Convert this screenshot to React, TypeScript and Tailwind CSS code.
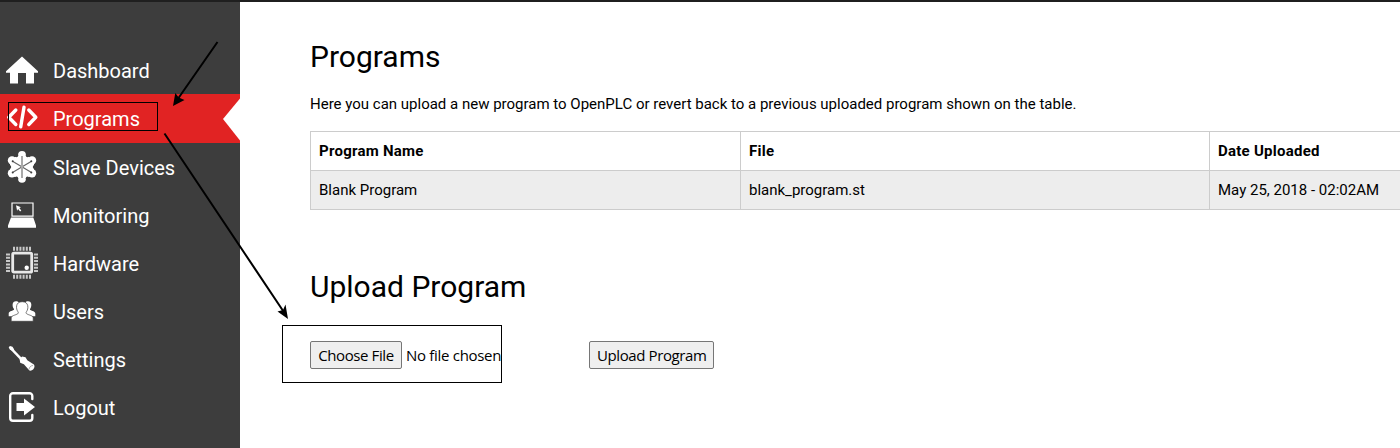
import React from "react";

const icons: Record<string, React.ReactNode> = {
  Dashboard: (
    <path fill="#fff" d="M18 6.500 34 21.300v1.400h-4v10.900h-8V23h-8v10.600H6V22.700H2v-1.400z" />
  ),
  Programs: (
    <g fill="none" stroke="#fff" strokeWidth="3.400" strokeLinecap="round" strokeLinejoin="round">
      <path d="M11.800 12 4.800 19.300l7 7.200M20 9.300l-3.300 19.600M24.800 12l7 7.300-7 7.200" />
    </g>
  ),
  "Slave Devices": (
    <>
      <g fill="#fff">
        <path d="M18 6 30 13v14l-12 7-12-7V13z" />
        <circle cx="18" cy="7.900" r="3.900" /><circle cx="18" cy="31.800" r="3.900" />
        <circle cx="8" cy="13.400" r="4.200" /><circle cx="28" cy="13.400" r="4.200" />
        <circle cx="8" cy="26.300" r="4.200" /><circle cx="28" cy="26.300" r="4.200" />
      </g>
      <g fill="#3d3d3d">
        <circle cx="12.500" cy="8.600" r="1.700" /><circle cx="23.500" cy="8.600" r="1.700" />
        <circle cx="12.500" cy="31.200" r="1.700" /><circle cx="23.500" cy="31.200" r="1.700" />
        <circle cx="5.200" cy="19.900" r="2" /><circle cx="30.800" cy="19.900" r="2" />
      </g>
      <path stroke="#666" strokeWidth="1.200" d="m8.500 14.300 19 11.200M27.500 14.300l-19 11.200" />
      <path stroke="#aaa" strokeWidth="2" d="M18 9v22" />
      <g fill="#3d3d3d">
        <circle cx="8.700" cy="14.300" r="1" /><circle cx="27.300" cy="14.300" r="1" />
        <circle cx="8.700" cy="25.500" r="1" /><circle cx="27.300" cy="25.500" r="1" />
      </g>
    </>
  ),
  Monitoring: (
    <>
      <path fill="none" stroke="#fff" strokeWidth="1.200" d="M8 8h21v13.200H8z" />
      <path fill="#fff" d="M7 22.400h22.300L32 30.500v2.300H4v-2.300zM12 10.300l5 2-1.700.8 2 2.300-1.200 1-2-2.300-1 1.600z" />
    </>
  ),
  Hardware: (
    <>
      <rect x="8.700" y="10.200" width="19" height="19" rx="1.200" fill="none" stroke="#e8e8e8" strokeWidth="2.800" />
      <g stroke="#c8c8c8" strokeWidth="2">
        <path d="M10 3.700v4M13.200 3.700v4M16.400 3.700v4M19.600 3.700v4M22.800 3.700v4M26 3.700v4M10 31.700v4M13.200 31.700v4M16.400 31.700v4M19.600 31.700v4M22.800 31.700v4M26 31.700v4" />
        <path d="M2 11.500h4M2 14.800h4M2 18.100h4M2 21.400h4M2 24.700h4M2 28h4M30 11.500h4M30 14.800h4M30 18.100h4M30 21.400h4M30 24.700h4M30 28h4" />
      </g>
      <circle cx="22.700" cy="24.700" r="2.200" fill="#fff" />
    </>
  ),
  Users: (
    <>
      <path fill="#fff" d="M4.700 25.200v-2.800c0-2 3.200-2.400 5-3.400.5-.4.4-1-.2-1.800-1.200-1.800-1.800-7 2.500-7 1.500 0 2.700.6 3.200 1.500h5.600c.5-.9 1.700-1.500 3.200-1.500 4.300 0 3.700 5.200 2.500 7-.6.8-.7 1.400-.2 1.800 1.800 1 5 1.400 5 3.400v2.800z" />
      <path fill="#fff" stroke="#3d3d3d" strokeWidth=".7" d="M7.200 30.300v-3.300c0-2.600 4.300-2.700 6.600-4.300.8-.6.6-1.300 0-2.200-1.800-2.400-2.700-9.800 4.400-9.800s6.200 7.400 4.400 9.800c-.6.900-.8 1.600 0 2.200 2.300 1.600 6.600 1.700 6.600 4.300v3.300z" />
    </>
  ),
  Settings: (
    <>
      <path stroke="#fff" strokeWidth="2.400" d="m6.500 8.800 11 11.500" />
      <path fill="#fff" d="m4.700 8.300 1.300-1.300 2.500.8 1.700 2.800-1.600 1.400-2.800-1.500zM15.600 20l2.500-2.400 3.400.7 1.800 2.900 6.600 4.300c2 2.800-1.400 7-4.500 6.100l-5.500-6.300-3.700-1.600z" />
      <path stroke="#999" fill="none" strokeWidth=".8" d="M25 30.500c.3-2.300 1.600-3.800 4-4" />
    </>
  ),
  Logout: (
    <>
      <path fill="none" stroke="#fff" strokeWidth="2.400" strokeLinecap="round" d="M28.300 12V9c0-1.600-1.200-2.800-2.800-2.800H9C7.400 6.200 6.200 7.400 6.200 9v22c0 1.600 1.200 2.800 2.800 2.800h16.500c1.600 0 2.800-1.200 2.800-2.800v-3" />
      <path fill="#fff" d="M12.500 16h7.500v-4.500l11 8.500-11 8.500v-4.500h-7.500z" />
    </>
  ),
};

const items = ["Dashboard", "Programs", "Slave Devices", "Monitoring", "Hardware", "Users", "Settings", "Logout"];

function NavItem({ label }: { label: string }) {
  const active = label === "Programs";
  return (
    <a className={`relative flex shrink-0 items-start pl-1 pt-1 text-white ${active ? "h-[49px] bg-[#e12323]" : "h-12"}`}>
      <svg className="h-10 w-9 shrink-0" viewBox="0 0 36 40">{icons[label]}</svg>
      <span className="ml-[13px] mt-[6px] whitespace-nowrap text-[20px] leading-[30px]">{label}</span>
      {active && (
        <svg className="absolute right-0 top-0 h-[49px] w-[17px]" viewBox="0 0 17 49">
          <path fill="#fff" d="M17 4.500v42L0 25z" />
        </svg>
      )}
    </a>
  );
}

const cell = "border border-[#ccc] px-2 h-[39px] text-left";
const head = `${cell} tracking-[0.25px]`;
const button = "h-7 rounded-[2px] border border-[#767676] bg-[#efefef] px-[7px] leading-[26px] whitespace-nowrap";

export default function App() {
  return (
    <div className="relative flex h-[448px] w-[1400px] overflow-hidden border-t-2 border-[#1f1f1f] bg-white font-['Roboto',sans-serif] text-black">
      <nav className="flex w-60 shrink-0 flex-col bg-[#3d3d3d] pt-11">
        {items.map((label) => <NavItem key={label} label={label} />)}
      </nav>
      <main className="ml-[70px] w-[1280px] shrink-0 pt-[35px]">
        <h1 className="text-[30px] leading-10">Programs</h1>
        <p className="mt-[15px] text-[15px] leading-[25px]">Here you can upload a new program to OpenPLC or revert back to a previous uploaded program shown on the table.</p>
        <table className="mt-[14px] w-[1280px] table-fixed border-collapse text-[15px]">
          <colgroup><col className="w-[430px]" /><col className="w-[469px]" /><col /></colgroup>
          <tbody>
            <tr><th className={head}>Program Name</th><th className={head}>File</th><th className={head}>Date Uploaded</th></tr>
            <tr className="bg-[#ededed]"><td className={cell}>Blank Program</td><td className={cell}>blank_program.st</td><td className={cell}>May 25, 2018 - 02:02AM</td></tr>
          </tbody>
        </table>
        <h1 className="mt-[57px] text-[30px] leading-10">Upload Program</h1>
        <form className="mt-[34px] flex items-center font-['Open_Sans','Noto_Sans',sans-serif] text-[15px] tracking-[-0.4px]">
          <div className="flex w-[279px] items-center">
            <button type="button" className={`${button} w-[92px]`}>Choose File</button>
            <span className="ml-1 whitespace-nowrap tracking-[-0.3px]">No file chosen</span>
          </div>
          <button type="button" className={`${button} w-[125px]`}>Upload Program</button>
        </form>
      </main>
      <svg className="pointer-events-none absolute left-0 -top-0.5 h-[448px] w-[520px]" viewBox="0 0 520 448">
        <g fill="none" stroke="#000" shapeRendering="crispEdges">
          <path d="M8.500 102.500h149v28h-149zM282.500 325.500h219v57h-219z" />
        </g>
        <g fill="none" stroke="#000" strokeWidth="2">
          <path d="m217.500 42-39 56M164.500 133.500l119 178" />
        </g>
        <path d="m173 106 2.300-13 3.400 4.500 5.800 2.500zM288 319l-10.500-7.500 5.500-1.500 2.500-5.500z" />
      </svg>
    </div>
  );
}
